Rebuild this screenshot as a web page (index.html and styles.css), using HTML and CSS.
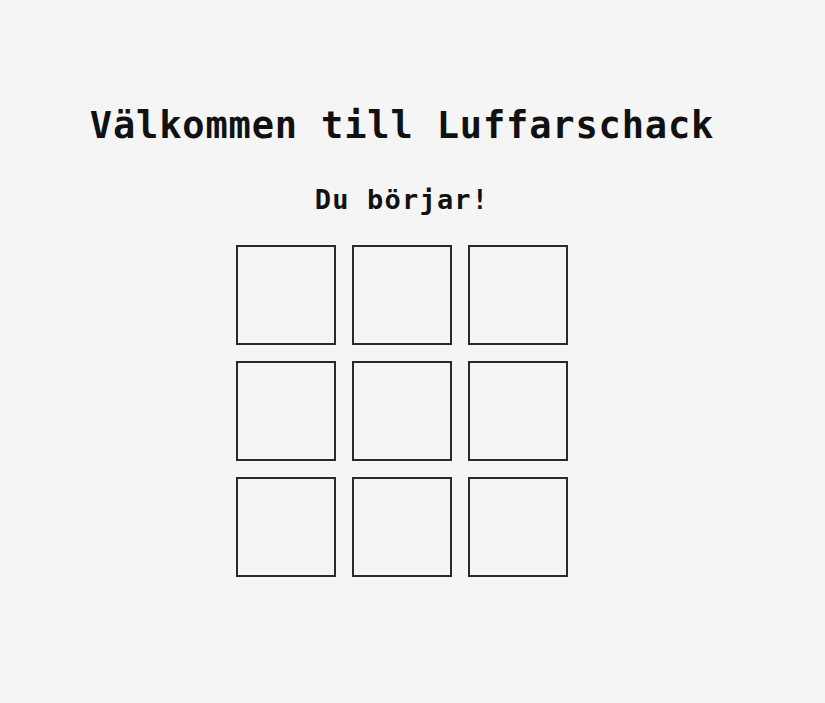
FILE: index.html
```html
<!DOCTYPE html>
<html lang="sv">
<head>
<meta charset="utf-8">
<title>Luffarschack</title>
<link rel="stylesheet" href="styles.css">
</head>
<body>
<main class="page">
  <h1 class="title">Välkommen till Luffarschack</h1>
  <h2 class="status">Du börjar!</h2>
  <div class="board">
    <button class="cell"></button>
    <button class="cell"></button>
    <button class="cell"></button>
    <button class="cell"></button>
    <button class="cell"></button>
    <button class="cell"></button>
    <button class="cell"></button>
    <button class="cell"></button>
    <button class="cell"></button>
  </div>
</main>
</body>
</html>
```

FILE: styles.css
```css
html, body {
  margin: 0;
  padding: 0;
  background: #f5f5f5;
}

body {
  font-family: "DejaVu Sans Mono", "Liberation Mono", monospace;
  color: #111;
}

.page {
  width: 804px;
  display: flex;
  flex-direction: column;
  align-items: center;
  padding-top: 100px;
}

.title {
  margin: 0;
  font-size: 37px;
  font-weight: bold;
  line-height: 52px;
  letter-spacing: 0.85px;
}

.status {
  margin: 30px 0 0;
  font-size: 27px;
  font-weight: bold;
  line-height: 36px;
  letter-spacing: 1.2px;
}

.board {
  margin-top: 27px;
  display: grid;
  grid-template-columns: repeat(3, 100px);
  grid-auto-rows: 100px;
  gap: 16px;
}

.cell {
  box-sizing: border-box;
  width: 100px;
  height: 100px;
  margin: 0;
  padding: 0;
  border: 2px solid #2a2a2a;
  background: transparent;
}
```
